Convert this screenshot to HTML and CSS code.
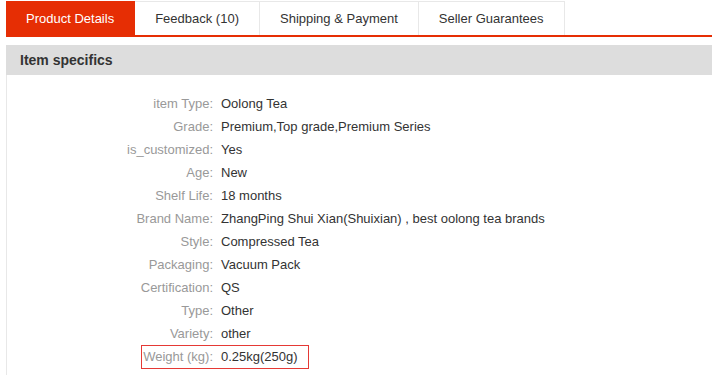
FILE: index.html
```html
<!DOCTYPE html>
<html lang="en">
<head>
    <meta charset="UTF-8">
    <title>Product Details</title>
    <link rel="stylesheet" href="styles.css">
</head>
<body>
    <div class="detail">
        <ul class="tabs">
            <li class="tab active">Product Details</li>
            <li class="tab">Feedback (10)</li>
            <li class="tab">Shipping &amp; Payment</li>
            <li class="tab">Seller Guarantees</li>
        </ul>

        <div class="specs">
            <h3 class="specs-title">Item specifics</h3>
            <ul class="specs-list">
                <li class="row"><span class="name">item Type:</span><span class="value">Oolong Tea</span></li>
                <li class="row"><span class="name">Grade:</span><span class="value">Premium,Top grade,Premium Series</span></li>
                <li class="row"><span class="name">is_customized:</span><span class="value">Yes</span></li>
                <li class="row"><span class="name">Age:</span><span class="value">New</span></li>
                <li class="row"><span class="name">Shelf Life:</span><span class="value">18 months</span></li>
                <li class="row"><span class="name">Brand Name:</span><span class="value">ZhangPing Shui Xian(Shuixian) , best oolong tea brands</span></li>
                <li class="row"><span class="name">Style:</span><span class="value">Compressed Tea</span></li>
                <li class="row"><span class="name">Packaging:</span><span class="value">Vacuum Pack</span></li>
                <li class="row"><span class="name">Certification:</span><span class="value">QS</span></li>
                <li class="row"><span class="name">Type:</span><span class="value">Other</span></li>
                <li class="row"><span class="name">Variety:</span><span class="value">other</span></li>
                <li class="row marked"><span class="name">Weight (kg):</span><span class="value">0.25kg(250g)</span></li>
                <li class="row"><span class="name">Other Names:</span><span class="value">Puffy tiny oolong tea, Shui Xian, Shui Hsien, Wuyi oolong, Wuyi</span></li>
            </ul>
        </div>
    </div>
</body>
</html>
```

FILE: styles.css
```css
body {
    margin: 0;
    font-family: "Liberation Sans", Arial, sans-serif;
    font-size: 13px;
    color: #333;
    overflow: hidden;
}
.detail {
    margin-left: 6px;
    padding-top: 1px;
}
.tabs {
    display: flex;
    list-style: none;
    margin: 0;
    padding: 0;
    border-bottom: 2px solid #e62e04;
}
.tab {
    height: 33px;
    line-height: 33px;
    padding: 0 20px;
    border-top: 1px solid #e8e8e8;
    border-right: 1px solid #e8e8e8;
    color: #333;
    background-color: #fff;
    white-space: nowrap;
}
.tab.active {
    background-color: #e62e04;
    border-color: #e62e04;
    color: #fff;
}
.specs {
    margin-top: 8px;
    border-left: 1px solid #e8e8e8;
}
.specs-title {
    margin: 0 0 0 -1px;
    height: 30px;
    line-height: 30px;
    padding-left: 14px;
    font-size: 14px;
    font-weight: bold;
    color: #333;
    background-color: #dddddd;
}
.specs-list {
    list-style: none;
    margin: 0;
    padding: 17px 0 0;
}
.row {
    position: relative;
    display: flex;
    line-height: 23px;
    white-space: nowrap;
}
.name {
    width: 206px;
    text-align: right;
    color: #999;
    flex-shrink: 0;
}
.value {
    margin-left: 8px;
    color: #333;
}
/* cadre rouge autour du poids */
.marked::before {
    content: "";
    position: absolute;
    left: 134px;
    top: 0;
    width: 166px;
    height: 22px;
    border: 1px solid #e53935;
}
```
